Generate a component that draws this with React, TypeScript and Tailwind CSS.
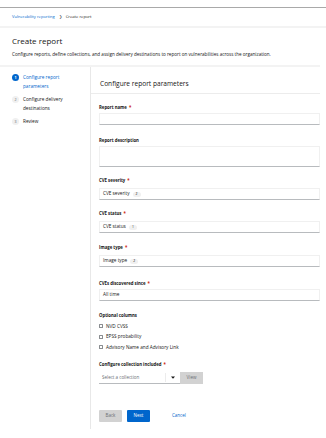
import React from 'react';

const font = { fontFamily: '"Open Sans", "Liberation Sans", sans-serif' };

const Label = ({ text, required }: { text: string; required?: boolean }) => (
    <div className="h-[8px] flex items-center text-[4.3px] font-bold text-[#151515]">
        {text}
        {required && <span className="ml-[2px] text-[#c9190b]">*</span>}
    </div>
);

const Badge = ({ n }: { n: number }) => (
    <span className="ml-[3px] inline-flex items-center justify-center h-[5px] min-w-[8px] px-[2px] rounded-full bg-[#f0f0f0] text-[3.4px] text-[#151515]">{n}</span>
);

const SelectBox = ({ children }: { children: React.ReactNode }) => (
    <div className="mt-[4px] h-[12px] flex items-center pl-[3px] bg-white border border-[#f0f0f0] border-b-[#b8bbbe] text-[4.7px] text-[#151515]">
        {children}
    </div>
);

const Step = ({ n, lines, active }: { n: number; lines: string[]; active?: boolean }) => (
    <div className="flex items-start gap-[4px]">
        <span
            className={
                active
                    ? 'mt-[1px] w-[7px] h-[7px] shrink-0 rounded-full bg-[#0066cc] text-white text-[3.6px] font-bold flex items-center justify-center'
                    : 'mt-[1px] w-[7px] h-[7px] shrink-0 rounded-full bg-[#f0f0f0] text-[#6a6e73] text-[3.6px] flex items-center justify-center'
            }
        >
            {n}
        </span>
        <div className={active ? 'text-[4.7px] leading-[9px] text-[#0066cc]' : 'text-[4.7px] leading-[9px] text-[#151515]'}>
            {lines.map((l) => (
                <div key={l}>{l}</div>
            ))}
        </div>
    </div>
);

const Check = ({ text }: { text: string }) => (
    <div className="h-[10.5px] flex items-center gap-[3px] text-[4.7px] text-[#151515]">
        <span className="w-[4px] h-[4px] border-[0.5px] border-[#8a8d90] rounded-[0.5px] bg-white" />
        {text}
    </div>
);

export default function App() {
    return (
        <div style={font} className="w-[326px] h-[438px] bg-white overflow-hidden">
            <div className="h-[8px] border-b border-[#a9a9a9]" />

            <div className="h-[18px] flex items-center px-[12px] text-[4.1px]">
                <span className="text-[#0066cc]">Vulnerability reporting</span>
                <span className="mx-[4px] text-[#6a6e73] text-[3.5px]">❯</span>
                <span className="text-[#151515]">Create report</span>
            </div>

            <div className="h-[2px] bg-[#f3f3f3]" />

            <div className="px-[12px] pt-[8px] pb-[8px]">
                <h1 className="text-[8px] leading-[10px] text-[#151515]">Create report</h1>
                <p className="mt-[5px] text-[4.6px] leading-[6px] text-[#151515] whitespace-nowrap">
                    Configure reports, define collections, and assign delivery destinations to report on vulnerabilities across the organization.
                </p>
            </div>

            <div className="h-[2px] bg-[#f3f3f3] mr-[6px]" />

            <div className="flex mr-[6px]">
                <nav className="w-[91px] shrink-0 border-r border-[#e8e8e8] pl-[12px] pt-[6px] flex flex-col gap-[4px] h-[362px]">
                    <Step n={1} lines={['Configure report', 'parameters']} active />
                    <Step n={2} lines={['Configure delivery', 'destinations']} />
                    <Step n={3} lines={['Review']} />
                </nav>

                <main className="flex-1 min-w-0">
                    <div className="h-[27px] flex items-end pb-[4px] pl-[9px] border-b border-[#ececec] text-[6.6px] text-[#151515]">
                        Configure report parameters
                    </div>

                    <div className="pl-[8px] pt-[9px] flex flex-col">
                        <Label text="Report name" required />
                        <div className="mt-[2px] h-[12px] border border-[#f0f0f0] border-b-[#b8bbbe]" />

                        <div className="mt-[11px]">
                            <Label text="Report description" />
                        </div>
                        <div className="mt-[2px] h-[21px] border border-[#f0f0f0] border-b-[#b8bbbe]" />

                        <div className="mt-[9px]">
                            <Label text="CVE severity" required />
                        </div>
                        <SelectBox>
                            CVE severity
                            <Badge n={2} />
                        </SelectBox>

                        <div className="mt-[9px]">
                            <Label text="CVE status" required />
                        </div>
                        <SelectBox>
                            CVE status
                            <Badge n={1} />
                        </SelectBox>

                        <div className="mt-[10px]">
                            <Label text="Image type" required />
                        </div>
                        <SelectBox>
                            Image type
                            <Badge n={2} />
                        </SelectBox>

                        <div className="mt-[12px]">
                            <Label text="CVEs discovered since" required />
                        </div>
                        <div className="mt-[2px] h-[12px] flex items-center pl-[3px] border border-[#f0f0f0] border-b-[#b8bbbe] text-[4.7px] text-[#151515]">
                            All time
                        </div>

                        <div className="mt-[10px]">
                            <Label text="Optional columns" />
                        </div>
                        <div className="mt-[2px] flex flex-col">
                            <Check text="NVD CVSS" />
                            <Check text="EPSS probability" />
                            <Check text="Advisory Name and Advisory Link" />
                        </div>

                        <div className="mt-[8px]">
                            <Label text="Configure collection included" required />
                        </div>
                        <div className="mt-[3px] flex h-[12px]">
                            <div className="w-[81px] flex items-center justify-between pl-[3px] pr-[5px] border-b border-[#b8bbbe] text-[4.5px] text-[#6a6e73]">
                                Select a collection
                                <span className="flex items-center gap-[5px]">
                                    <span className="w-px h-[9px] bg-[#ececec]" />
                                    <svg width="4" height="3" viewBox="0 0 4 3">
                                        <path d="M0 0.5 L4 0.5 L2 2.8 Z" fill="#151515" />
                                    </svg>
                                </span>
                            </div>
                            <div className="w-[23px] flex items-center justify-center bg-[#d2d2d2] text-[4.5px] text-[#6a6e73]">View</div>
                        </div>

                        <div className="mt-[26px] flex items-center">
                            <div className="w-[23px] h-[12px] flex items-center justify-center bg-[#d2d2d2] rounded-[1px] text-[4.5px] text-[#6a6e73]">Back</div>
                            <div className="ml-[5px] w-[23px] h-[12px] flex items-center justify-center bg-[#0066cc] rounded-[1px] text-[4.5px] text-white">Next</div>
                            <div className="ml-[22px] text-[4.5px] text-[#0066cc]">Cancel</div>
                        </div>
                    </div>
                </main>
            </div>
        </div>
    );
}
